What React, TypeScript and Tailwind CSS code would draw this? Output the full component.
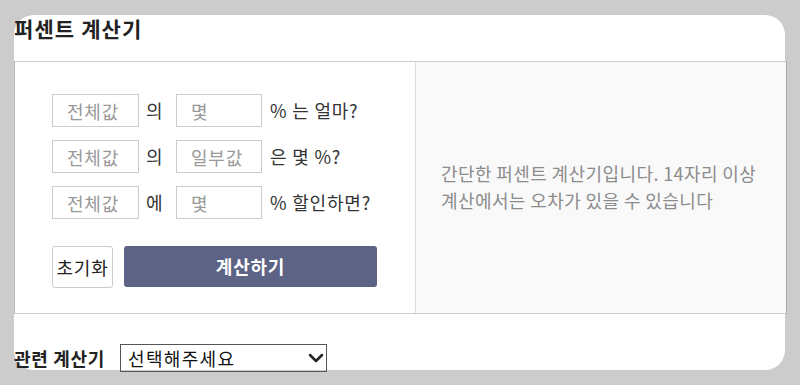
import { ChevronDown } from 'lucide-react'

const rows = [
  { a: '전체값', join: '의', b: '몇', tail: '% 는 얼마?' },
  { a: '전체값', join: '의', b: '일부값', tail: '은 몇 %?' },
  { a: '전체값', join: '에', b: '몇', tail: '% 할인하면?' }
]

const font = { fontFamily: '"Noto Sans CJK KR", "Noto Sans", sans-serif' }

export default function App() {
  return (
    <div className="h-[385px] w-[800px] bg-[#cccccc] pt-[15px] pl-[14px] pr-[15px]" style={font}>
      <div className="flex h-[355px] flex-col rounded-[20px] bg-white">
        <h1 className="h-[46px] shrink-0 text-[21px] font-bold leading-[27px] tracking-[1.1px] text-[#222]">퍼센트 계산기</h1>

        <div className="mr-[-2px] flex h-[253px] shrink-0 border border-[#cccccc] border-l-[#b8b8b8] border-r-[#a8a8a8]">
          <div className="flex w-[400px] flex-col bg-white pl-[37px] pt-[32px]">
            <div className="flex flex-col gap-[13px]">
              {rows.map((r, i) => (
                <div key={i} className="flex h-[33px] items-center text-[18px] tracking-[0.8px] text-[#333]">
                  <input
                    placeholder={r.a}
                    className="h-[33px] w-[87px] border border-[#cccccc] pl-[14px] text-[18px] tracking-[0.8px] placeholder:text-[#999]"
                  />
                  <span className="ml-[7px] mr-[13px] w-[17px]">{r.join}</span>
                  <input
                    placeholder={r.b}
                    className="h-[33px] w-[86px] border border-[#cccccc] pl-[14px] text-[18px] tracking-[0.8px] placeholder:text-[#999]"
                  />
                  <span className="ml-[8px]">{r.tail}</span>
                </div>
              ))}
            </div>
            <div className="mt-[27px] flex gap-[11px]">
              <button className="h-[42px] w-[61px] rounded-[3px] border border-[#cccccc] text-[18px] tracking-[0.8px] text-[#222]">
                초기화
              </button>
              <button className="h-[41px] w-[253px] rounded-[3px] bg-[#5c6384] text-[18px] font-bold tracking-[0.8px] text-white">
                계산하기
              </button>
            </div>
          </div>
          <div className="flex flex-1 items-center border-l border-[#dddddd] bg-[#f9f9f9] pl-[25px] pb-[1px]">
            <p className="text-[18px] leading-[27px] tracking-[0.4px] text-[#8c8c8c]">
              간단한 퍼센트 계산기입니다. 14자리 이상
              <br />
              계산에서는 오차가 있을 수 있습니다
            </p>
          </div>
        </div>

        <div className="mt-[30px] flex shrink-0 items-center">
          <span className="text-[18px] font-bold tracking-[0.7px] text-[#222]">관련 계산기</span>
          <div className="relative ml-[15px]">
            <select className="h-[28px] w-[207px] appearance-none border border-[#555] pl-[7px] text-[18px] leading-[26px] tracking-[1.3px] text-[#111]">
              <option>선택해주세요</option>
            </select>
            <ChevronDown
              className="pointer-events-none absolute right-[-1px] top-[2px] h-6 w-6 text-[#222]"
              strokeWidth={2.5}
            />
          </div>
        </div>
      </div>
    </div>
  )
}
